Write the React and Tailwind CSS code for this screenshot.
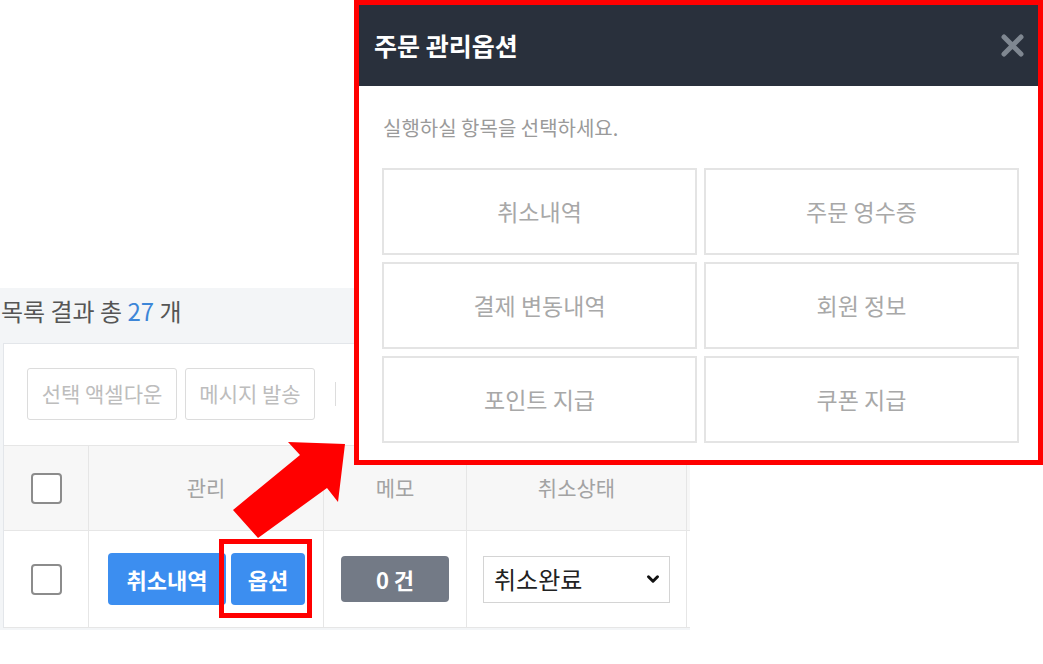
import { ChevronDown } from "lucide-react";

const KR = "font-['Noto_Sans_CJK_KR','Noto_Sans',sans-serif]";

// 주문 관리옵션 모달의 버튼들
const options = ["취소내역", "주문 영수증", "결제 변동내역", "회원 정보", "포인트 지급", "쿠폰 지급"];

function Checkbox() {
  return <div className="w-[31px] h-[31px] rounded-[4px] border-2 border-[#8c8c8c] bg-white" />;
}

function ListPanel() {
  return (
    <div className="mt-[288px] w-[690px] h-[342px] bg-[#f3f5f7] overflow-hidden">
      <div className="h-[55px] pt-[8px] pl-[1px] text-[24px] leading-[30px] text-[#555]">
        목록 결과 총 <span className="text-[#3d86d8]">27</span> 개
      </div>

      <div className="ml-[3px] w-[700px] bg-white border-l border-t border-[#e3e6ea]">
        {/* toolbar */}
        <div className="h-[101px] pt-[24px] pl-[23px] flex items-start gap-[8px]">
          <div className="w-[150px] h-[52px] flex items-center justify-center rounded-[3px] border border-[#dcdcdc] text-[21px] text-[#bdbdbd]">
            선택 액셀다운
          </div>
          <div className="w-[130px] h-[52px] flex items-center justify-center rounded-[3px] border border-[#dcdcdc] text-[21px] text-[#bdbdbd]">
            메시지 발송
          </div>
          <div className="ml-[12px] mt-[14px] w-px h-[24px] bg-[#dddddd]" />
        </div>

        {/* header */}
        <div className="flex h-[86px] border-t border-b border-[#e6e6e6] bg-[#f7f7f7] text-[21px] text-[#a3a3a3]">
          <div className="w-[85px] border-r border-[#e6e6e6] flex items-center justify-center">
            <Checkbox />
          </div>
          <div className="w-[235px] border-r border-[#e6e6e6] flex items-center justify-center">관리</div>
          <div className="w-[143px] border-r border-[#e6e6e6] flex items-center justify-center">메모</div>
          <div className="w-[220px] border-r border-[#e6e6e6] flex items-center justify-center">취소상태</div>
        </div>

        {/* row */}
        <div className="flex h-[97px] border-b border-[#e6e6e6]">
          <div className="w-[85px] border-r border-[#e6e6e6] flex items-center justify-center">
            <Checkbox />
          </div>
          <div className="w-[235px] border-r border-[#e6e6e6] flex items-center pl-[19px] gap-[5px]">
            <div className="w-[118px] h-[52px] rounded-[4px] bg-[#3c8ef0] text-white font-bold text-[22px] flex items-center justify-center">
              취소내역
            </div>
            <div className="w-[74px] h-[52px] rounded-[4px] bg-[#3c8ef0] text-white font-bold text-[22px] flex items-center justify-center">
              옵션
            </div>
          </div>
          <div className="w-[143px] border-r border-[#e6e6e6] flex items-center justify-center">
            <div className="w-[108px] h-[46px] rounded-[4px] bg-[#737a86] text-white font-bold text-[22px] flex items-center justify-center">
              0 건
            </div>
          </div>
          <div className="w-[220px] border-r border-[#e6e6e6] flex items-center justify-center">
            <div className="w-[187px] h-[47px] border border-[#d4d4d4] bg-white flex items-center justify-between pl-[10px] pr-[7px] text-[24px] text-[#222]">
              취소완료
              <ChevronDown size={18} strokeWidth={4} className="text-[#111]" />
            </div>
          </div>
        </div>
      </div>
    </div>
  );
}

function OptionModal() {
  return (
    <div className="absolute left-[354px] top-0 w-[689px] h-[465px] border-[5px] border-[#ff0000] bg-white">
      <div className="h-[81px] bg-[#29303c] flex items-center justify-between pl-[15px] pr-[14px]">
        <span className="text-[25px] font-bold text-white">주문 관리옵션</span>
        <svg width="23" height="23" viewBox="0 0 23 23">
          <path d="M3 3 L20 20 M20 3 L3 20" stroke="#7f8791" strokeWidth="5" strokeLinecap="round" />
        </svg>
      </div>
      <div className="pl-[23px] pt-[28px]">
        <div className="text-[20px] leading-[28px] text-[#9a9a9a] pl-[1px]">실행하실 항목을 선택하세요.</div>
        <div className="mt-[26px] w-[637px] grid grid-cols-2 gap-[7px]">
          {options.map((o) => (
            <div
              key={o}
              className="h-[87px] border-2 border-[#e4e4e4] flex items-center justify-center text-[23px] text-[#a8a8a8]"
            >
              {o}
            </div>
          ))}
        </div>
      </div>
    </div>
  );
}

export default function App() {
  return (
    <div className={`relative w-[1043px] h-[664px] bg-white overflow-hidden ${KR}`}>
      <ListPanel />
      <OptionModal />

      {/* 옵션 버튼 강조 박스 */}
      <div className="absolute left-[219px] top-[539px] w-[93px] h-[79px] border-[5px] border-[#ff0000]" />

      {/* 화살표 */}
      <svg className="absolute left-[220px] top-[430px]" width="140" height="120" viewBox="0 0 140 120">
        <polygon points="13,80 80,25 68,12 125,14 118,72 107,58 38,108" fill="#ff0000" />
      </svg>
    </div>
  );
}
